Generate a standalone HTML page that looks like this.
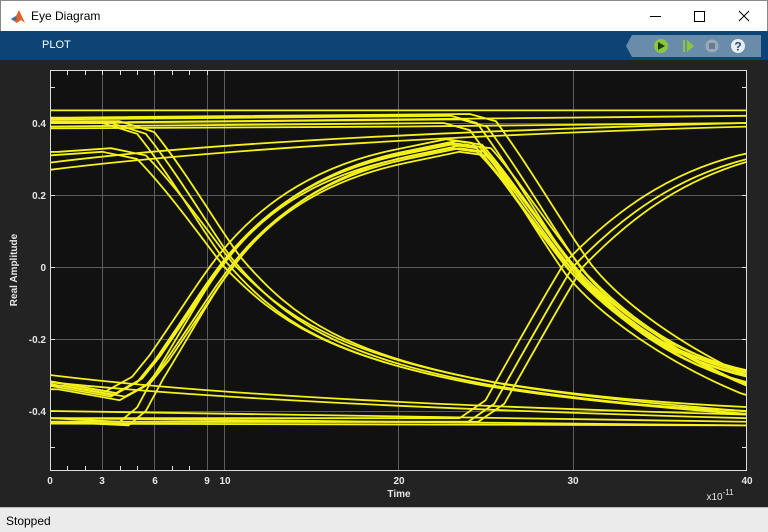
<!DOCTYPE html>
<html><head><meta charset="utf-8"><style>
*{margin:0;padding:0;box-sizing:border-box}
body{width:768px;height:532px;overflow:hidden;background:#232323;font-family:"Liberation Sans",sans-serif;position:relative}
.title{position:absolute;left:0;top:0;width:768px;height:31px;background:#fff;border:1px solid #888;border-bottom:none}
.title span{position:absolute;left:30px;top:8px;font-size:12px;color:#000}
.bar{position:absolute;left:0;top:31px;width:768px;height:29px;background:#0b4475}
.bar .plot{position:absolute;left:42px;top:8px;color:#fff;font-size:11px}
.status{position:absolute;left:0;top:507px;width:768px;height:25px;background:#ebebeb;border-top:1px solid #bbb}
.status span{position:absolute;left:6px;top:6px;font-size:12px;color:#000}
svg text{font-family:"Liberation Sans",sans-serif}
</style></head><body>
<div class="title">
<svg width="16" height="16" style="position:absolute;left:9px;top:8px" viewBox="0 0 16 16"><path d="M1 10 L6 7 L9 1 L15 14 L11 11 L7 14 Z" fill="#e0602a"/><path d="M1 10 L6 7 L7 10 L4 12Z" fill="#3a6fa8"/></svg>
<span>Eye Diagram</span>
<svg width="120" height="31" style="position:absolute;left:640px;top:0" viewBox="0 0 120 31">
<line x1="9" y1="15.5" x2="20" y2="15.5" stroke="#000"/>
<rect x="53.5" y="10.5" width="10" height="10" fill="none" stroke="#000"/>
<path d="M98 10 L108 20 M108 10 L98 20" stroke="#000"/>
</svg>
</div>
<div class="bar"><span class="plot">PLOT</span>
<svg width="140" height="24" style="position:absolute;left:624px;top:3px" viewBox="0 0 140 24">
<path d="M8 1 L137 1 L137 23 L8 23 L2 12 Z" fill="#6a8cab"/>
<circle cx="37" cy="12" r="7" fill="#8cc63f"/><path d="M34 8 L41 12 L34 16Z" fill="#1d3a10"/>
<rect x="59" y="6" width="2" height="12" fill="#8cc63f"/><path d="M63 6 L70 12 L63 18Z" fill="#8cc63f"/>
<circle cx="88" cy="12" r="6.5" fill="#9aaabb"/><rect x="85" y="9" width="6" height="6" fill="#6a7c8c"/>
<circle cx="114" cy="12" r="7" fill="#e8eef4"/><text x="114" y="16.5" font-size="12" font-weight="bold" text-anchor="middle" fill="#2a4a6a">?</text>
</svg></div>

<svg width="768" height="447" style="position:absolute;left:0;top:60px" viewBox="0 60 768 447">
<defs>
<clipPath id="cp"><rect x="51" y="71" width="695" height="399"/></clipPath>
<path id="rise" d="M20 385 L50 385.8 L111 396.6 L137.1 382.2 L154.6 360.6 C189.4 310.2 206.8 281.4 224.3 259.8 C259.1 216.6 311.4 173.4 398.5 155.4 L450.8 144.6 L476.9 148.2 C503.1 177 537.9 231 572.8 274.2 C625 328.2 677.3 360.6 747 375 L770 378"/>
<path id="fall" d="M20 123 L102.3 123 L137.1 133.8 C172 177 206.8 238.2 224.3 259.8 C276.5 321 328.8 357 485.6 385.8 C572.8 400.2 659.9 407.4 747 414.6 L770 416"/>
<path id="fall2" d="M20 156 L50 155.4 L102.3 151.8 L137.1 159 C172 195 206.8 245.4 224.3 267 C276.5 321 328.8 357 485.6 385.8 C572.8 400.2 659.9 407.4 747 411 L770 412"/>
<path id="late" d="M20 421.8 L468.2 421.8 L494.3 403.8 C520.5 357 555.3 295.8 572.8 267 C625 213 677.3 177 747 159 L770 154"/>
<path id="early" d="M20 418 L50 418.2 L119.7 421.8 L137.1 407.4 L154.6 375 C189.4 317.4 206.8 285 224.3 263.4 C259.1 216.6 311.4 177 398.5 159 L450.8 148.2 L476.9 151.8 C503.1 177 537.9 231 572.8 270.6 C625 328.2 677.3 364.2 747 382.2 L770 386"/>
<path id="hifall" d="M20 119.5 L50 119.4 L450.8 115.8 L476.9 123 C511.8 169.8 546.6 231 572.8 267 C607.6 310.2 677.3 357 747 385.8 L770 393"/>
</defs>
<rect x="50" y="70" width="697" height="400" fill="#111"/>
<g stroke="#5c5c5c" stroke-width="1">
<line x1="102.5" y1="70" x2="102.5" y2="470"/><line x1="154.5" y1="70" x2="154.5" y2="470"/><line x1="207.5" y1="70" x2="207.5" y2="470"/><line x1="224.5" y1="70" x2="224.5" y2="470"/><line x1="398.5" y1="70" x2="398.5" y2="470"/><line x1="573.5" y1="70" x2="573.5" y2="470"/>
<line x1="50" y1="123.5" x2="747" y2="123.5"/><line x1="50" y1="195.5" x2="747" y2="195.5"/><line x1="50" y1="267.5" x2="747" y2="267.5"/><line x1="50" y1="339.5" x2="747" y2="339.5"/><line x1="50" y1="411.5" x2="747" y2="411.5"/>
</g>
<g clip-path="url(#cp)" fill="none" stroke="#f4f21a" stroke-width="1.8">
<path d="M50 110.4 L747 110.4"/>
<path d="M50 123 L398 119.4 L747 115.8"/>
<path d="M50 128.4 L398 126.6 L747 123"/>
<path d="M50 169.8 C224.3 148.2 485.6 133.8 747 126.6"/>
<path d="M50 162.6 C224.3 140.6 485.6 130.2 747 123"/>
<path d="M50 375 C224.3 396.6 485.6 407.4 747 414.6"/>
<path d="M50 382.2 C224.3 400.2 485.6 411 747 418.2"/>
<path d="M50 411 L747 421.8"/>
<path d="M50 418.2 L747 425.4"/>
<path d="M50 423.6 L747 425.4"/>
<use href="#rise"/>
<use href="#rise" transform="translate(5,-3.6)"/>
<use href="#rise" transform="translate(8.7,3.6)"/>
<use href="#rise" transform="translate(-5,-5.4)"/>
<use href="#rise" transform="translate(14,0)"/>
<use href="#rise" transform="translate(2,-1.5)"/>
<use href="#fall"/>
<use href="#fall" transform="translate(8.7,0)"/>
<use href="#fall" transform="translate(17,-1.8)"/>
<use href="#fall2"/>
<use href="#fall2" transform="translate(8.7,-3.6)"/>
<use href="#late"/>
<use href="#late" transform="translate(10,0)"/>
<use href="#late" transform="translate(-8.7,-3.6)"/>
<use href="#early"/>
<use href="#early" transform="translate(8.7,3.6)"/>
<use href="#hifall"/>
<use href="#hifall" transform="translate(10,3.6)"/>
<use href="#hifall" transform="translate(19,-1.8)"/>
<use href="#hifall" transform="translate(-7,7.2)"/>
</g>
<rect x="50.5" y="70.5" width="696" height="400" fill="none" stroke="#ddd" stroke-width="1"/>
<g stroke="#ddd">
<path d="M67.5 470 v-4 M85.5 470 v-4 M120.5 470 v-4 M137.5 470 v-4 M172.5 470 v-4 M189.5 470 v-4 M67.5 71 v4 M85.5 71 v4 M120.5 71 v4 M137.5 71 v4 M172.5 71 v4 M189.5 71 v4 M102.5 71 v4 M154.5 71 v4 M207.5 71 v4"/>
<path d="M51 87.5 h4 M51 123.5 h4 M51 195.5 h4 M51 267.5 h4 M51 339.5 h4 M51 411.5 h4 M51 447.5 h4 M746 87.5 h-4 M746 123.5 h-4 M746 195.5 h-4 M746 267.5 h-4 M746 339.5 h-4 M746 411.5 h-4 M746 447.5 h-4"/>
</g>
<g fill="#e6e6e6" font-size="10" font-weight="bold" text-anchor="middle">
<text x="50" y="484">0</text><text x="102" y="484">3</text><text x="155" y="484">6</text><text x="207" y="484">9</text><text x="225" y="484">10</text><text x="399" y="484">20</text><text x="573" y="484">30</text><text x="747" y="484">40</text>
<text x="399" y="497">Time</text>
<text x="720" y="500" font-weight="normal">x10<tspan font-size="8" dy="-5">-11</tspan></text>
</g>
<g fill="#e6e6e6" font-size="10" font-weight="bold" text-anchor="end">
<text x="46" y="127">0.4</text><text x="46" y="199">0.2</text><text x="46" y="271">0</text><text x="46" y="343">-0.2</text><text x="46" y="415">-0.4</text>
</g>
<text transform="translate(17,270) rotate(-90)" fill="#e6e6e6" font-size="10" font-weight="bold" text-anchor="middle">Real Amplitude</text>
</svg>
<div class="status"><span>Stopped</span></div>
</body></html>
